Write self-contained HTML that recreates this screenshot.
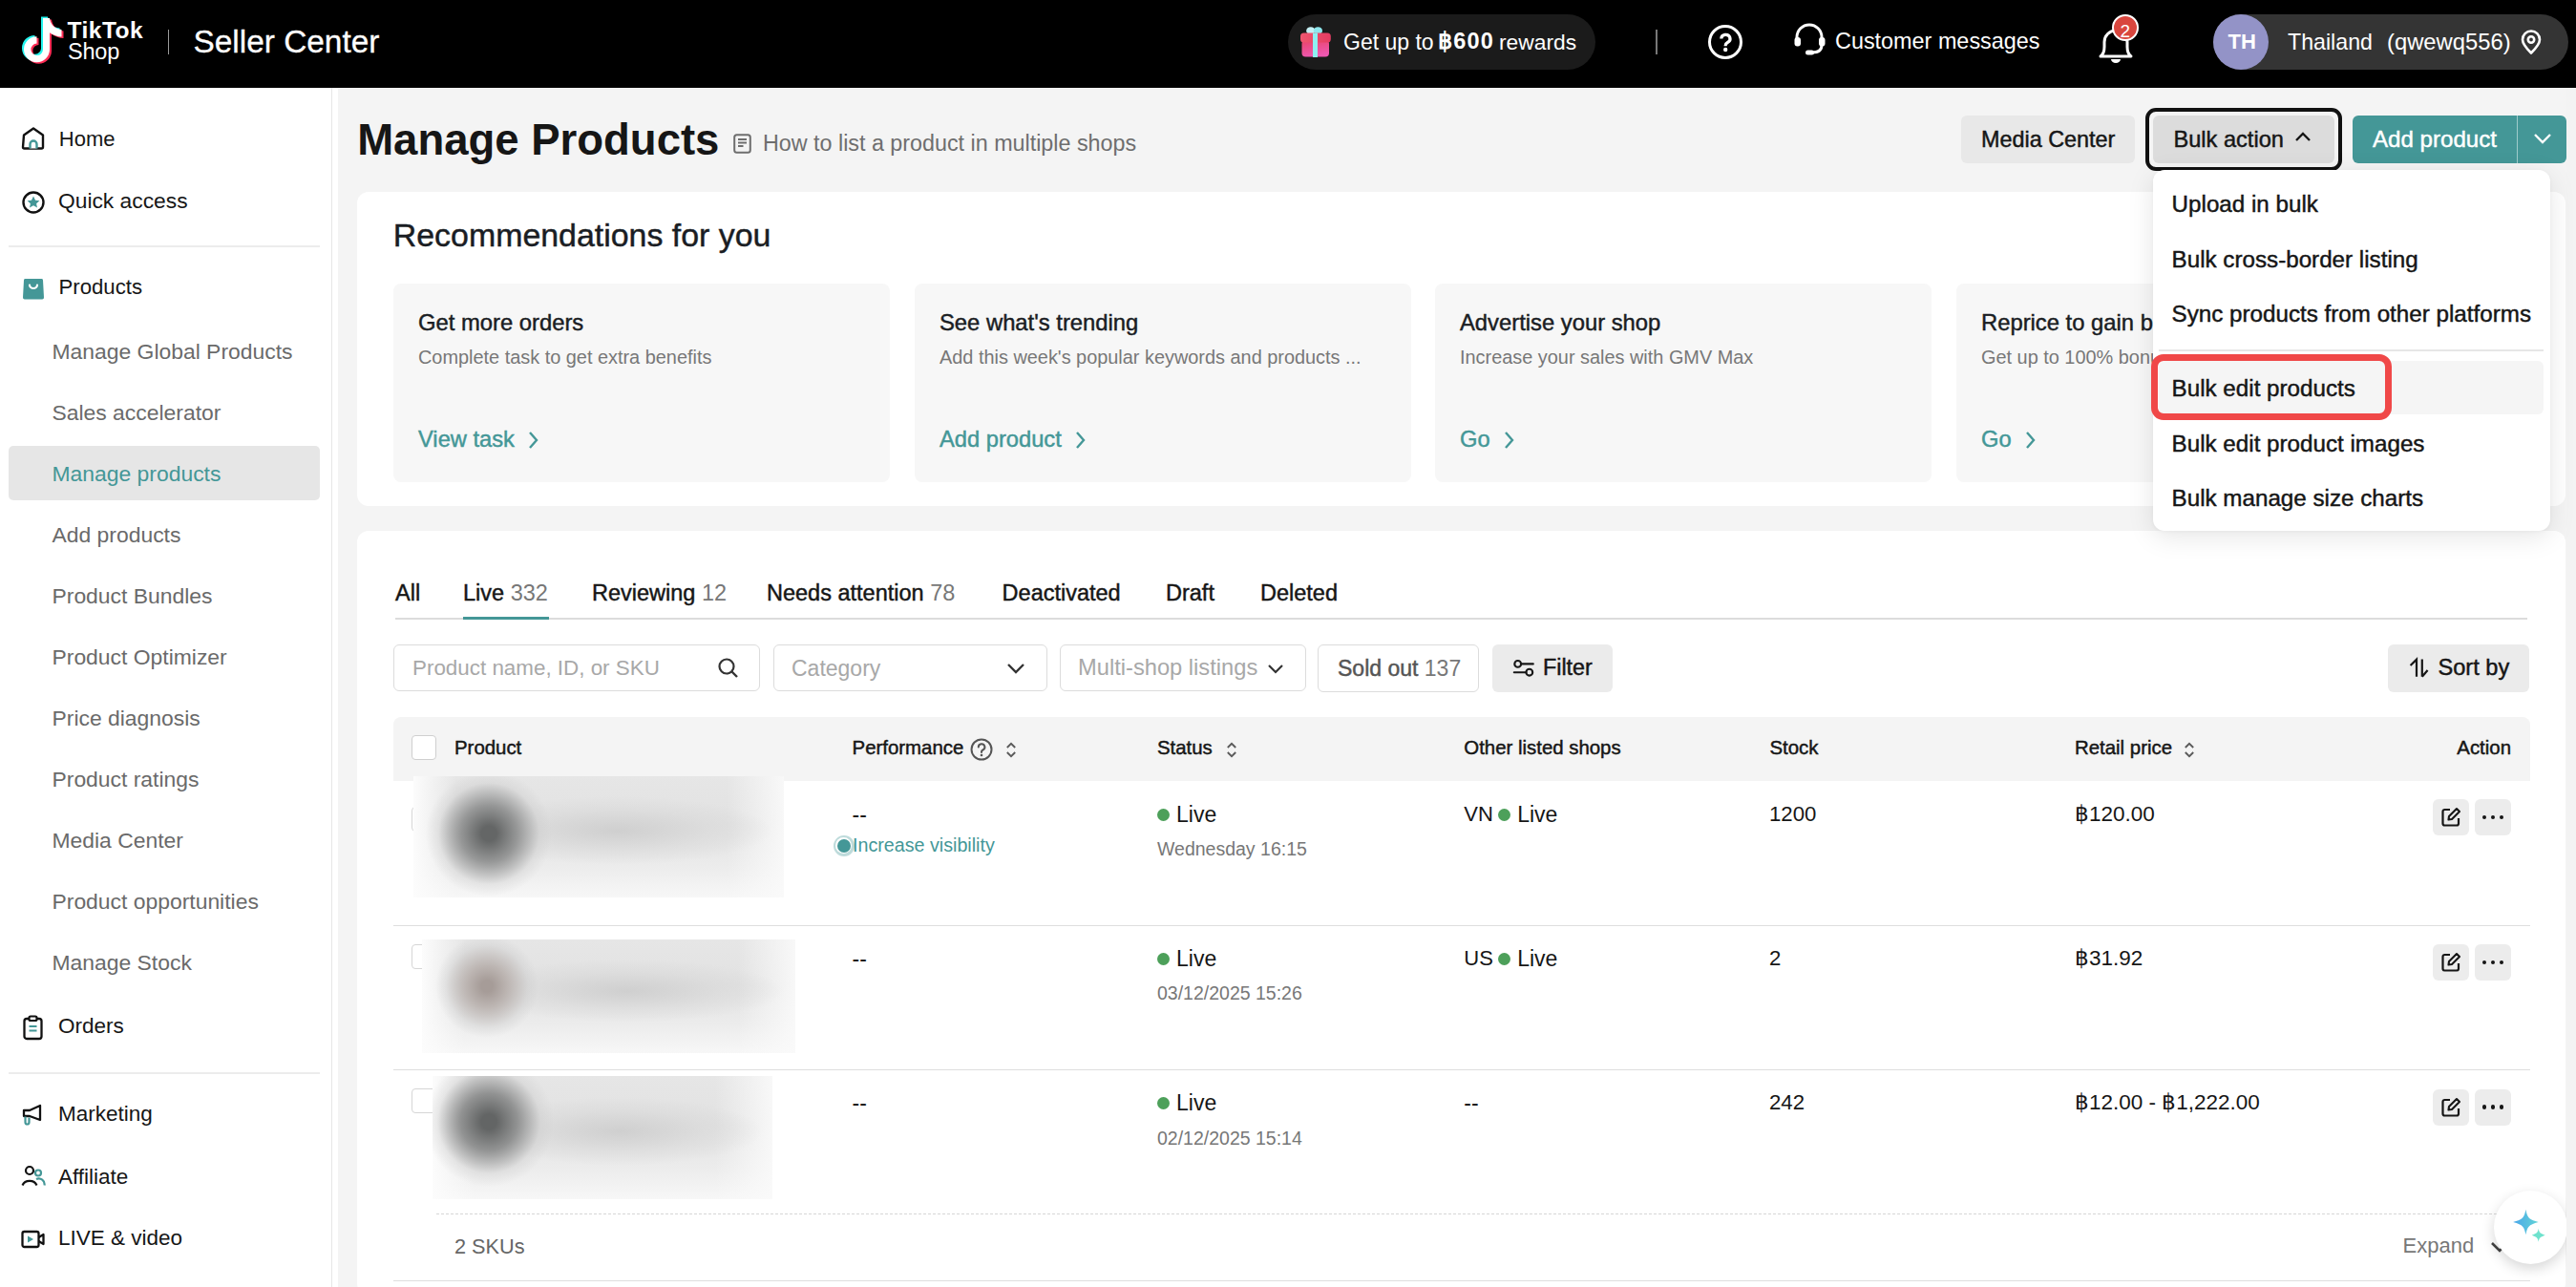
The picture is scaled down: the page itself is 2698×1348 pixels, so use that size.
<!DOCTYPE html><html><head><meta charset="utf-8"><style>
html,body{margin:0;padding:0;}
body{width:2698px;height:1348px;overflow:hidden;position:relative;background:#f4f4f4;font-family:"Liberation Sans",sans-serif;}
.t{position:absolute;white-space:nowrap;line-height:1;}
</style></head><body>
<div style="position:absolute;left:0px;top:0px;width:2698px;height:92px;background:#000;"></div>
<svg style="position:absolute;left:0px;top:0px;" width="80" height="92" viewBox="0 0 80 92" fill="none"><g transform="translate(-2.0,-1.4)"><path d="M45 19 h7 c0.8 6.5 5.5 11.5 12.5 12 v7.5 c-4.5 0 -8.5 -1.6 -12.5 -4.2 v17.5 a13.5 13.5 0 1 1 -13.5 -13.5 v7.2 a6.3 6.3 0 1 0 6.5 6.3 z" fill="#25F4EE"/></g><g transform="translate(2.0,1.4)"><path d="M45 19 h7 c0.8 6.5 5.5 11.5 12.5 12 v7.5 c-4.5 0 -8.5 -1.6 -12.5 -4.2 v17.5 a13.5 13.5 0 1 1 -13.5 -13.5 v7.2 a6.3 6.3 0 1 0 6.5 6.3 z" fill="#FE2C55"/></g><g transform="translate(0,0)"><path d="M45 19 h7 c0.8 6.5 5.5 11.5 12.5 12 v7.5 c-4.5 0 -8.5 -1.6 -12.5 -4.2 v17.5 a13.5 13.5 0 1 1 -13.5 -13.5 v7.2 a6.3 6.3 0 1 0 6.5 6.3 z" fill="#fff"/></g></svg>
<div class="t " style="left:70.5px;top:20.1px;font-size:24.5px;color:#fff;font-weight:bold;letter-spacing:0.5px;">TikTok</div>
<div class="t " style="left:71.0px;top:43.4px;font-size:23.5px;color:#fff;letter-spacing:-0.2px;">Shop</div>
<div style="position:absolute;left:175.5px;top:31px;width:1.6px;height:26px;background:#9a9a9a;"></div>
<div class="t " style="left:202.5px;top:27.4px;font-size:33.4px;color:#fff;-webkit-text-stroke:0.3px #fff;">Seller Center</div>
<div style="position:absolute;left:1349px;top:15px;width:322px;height:58px;background:#1b1b1b;border-radius:29px;"></div>
<svg style="position:absolute;left:1360px;top:26px;" width="36" height="36" viewBox="0 0 36 36" fill="none"><defs><linearGradient id="gb" x1="0" y1="0" x2="0.3" y2="1"><stop offset="0" stop-color="#ea4468"/><stop offset="1" stop-color="#ee58b0"/></linearGradient><linearGradient id="gl" x1="0" y1="0" x2="1" y2="0"><stop offset="0" stop-color="#f0566f"/><stop offset="1" stop-color="#e43c62"/></linearGradient></defs>
<ellipse cx="12.8" cy="6.2" rx="4.6" ry="4" fill="#c5f0f4"/><ellipse cx="20.4" cy="6.2" rx="4.6" ry="4" fill="#8ee8ee"/>
<rect x="3.5" y="16" width="28.5" height="17.5" rx="4" fill="url(#gb)"/>
<rect x="2" y="8.5" width="31.8" height="10" rx="3.5" fill="url(#gl)"/>
<rect x="15" y="8.5" width="5" height="25.5" fill="#8ef0f2"/>
</svg>
<div class="t " style="left:1407.0px;top:32.7px;font-size:23px;color:#fff;">Get up to</div>
<div class="t " style="left:1506.0px;top:32.3px;font-size:23.5px;color:#fff;font-weight:bold;letter-spacing:1.2px;">฿600</div>
<div class="t " style="left:1570.0px;top:32.9px;font-size:22.8px;color:#fff;">rewards</div>
<div style="position:absolute;left:1734px;top:31px;width:2px;height:26px;background:#777;"></div>
<svg style="position:absolute;left:1788px;top:25px;" width="38" height="38" viewBox="0 0 38 38" fill="none"><circle cx="19" cy="19" r="16.5" stroke="#fff" stroke-width="3"/><path d="M14.8 15.6 a4.6 4.3 0 1 1 6.6 3.9 c-1.3 0.7 -2.2 1.6 -2.2 3 v0.8" stroke="#fff" stroke-width="3.2" stroke-linecap="butt"/><circle cx="19.2" cy="27" r="2.2" fill="#fff"/></svg>
<svg style="position:absolute;left:1877px;top:23px;" width="38" height="36" viewBox="0 0 38 36" fill="none"><path d="M5 20 v-4 a13 13 0 0 1 26 0 v4" stroke="#fff" stroke-width="3"/><rect x="2.5" y="16" width="6.5" height="9.5" rx="3" fill="#fff"/><rect x="28" y="16" width="6.5" height="9.5" rx="3" fill="#fff"/><path d="M31 24 c0 5 -3.5 8 -10 8" stroke="#fff" stroke-width="3"/><rect x="14" y="29.5" width="9" height="5" rx="2.5" fill="#fff"/></svg>
<div class="t " style="left:1922.0px;top:32.4px;font-size:23.4px;color:#fff;">Customer messages</div>
<svg style="position:absolute;left:2194px;top:24px;" width="44" height="44" viewBox="0 0 44 44" fill="none"><path d="M6 35 c3 -2 4 -5 4 -10 v-5 a12 12 0 0 1 24 0 v5 c0 5 1 8 4 10 z" stroke="#fff" stroke-width="3" stroke-linejoin="round"/><path d="M17 38 h10 a5 4 0 0 1 -10 0z" fill="#fff"/></svg>
<div style="position:absolute;left:2212px;top:15px;width:28px;height:28px;border-radius:50%;background:#d9463e;border:2px solid #fff;box-sizing:border-box;"></div>
<div class="t " style="left:2220.5px;top:22.9px;font-size:19px;color:#fff;">2</div>
<div style="position:absolute;left:2318px;top:15px;width:372px;height:58px;background:#343434;border-radius:29px;"></div>
<div style="position:absolute;left:2318px;top:15px;width:58px;height:58px;background:#9393c7;border-radius:50%;"></div>
<div class="t " style="left:2333.5px;top:33.4px;font-size:22px;color:#fff;font-weight:bold;">TH</div>
<div class="t " style="left:2396.0px;top:32.5px;font-size:23.2px;color:#fff;">Thailand</div>
<div class="t " style="left:2500.0px;top:32.0px;font-size:23.8px;color:#fff;">(qwewq556)</div>
<svg style="position:absolute;left:2638px;top:30px;" width="26" height="28" viewBox="0 0 26 28" fill="none"><path d="M13 25.5 c-5 -5 -9 -9.5 -9 -14 a9 9 0 0 1 18 0 c0 4.5 -4 9 -9 14z" stroke="#fff" stroke-width="2.6" stroke-linejoin="round"/><circle cx="13" cy="11.5" r="3.2" stroke="#fff" stroke-width="2.6"/></svg>
<div style="position:absolute;left:0px;top:92px;width:347px;height:1256px;background:#fff;"></div>
<div style="position:absolute;left:347px;top:92px;width:1px;height:1256px;background:#e6e6e6;"></div>
<div style="position:absolute;left:348px;top:92px;width:6px;height:1256px;background:#fff;"></div>
<div style="position:absolute;left:348px;top:92px;width:2350px;height:1px;background:#fff;"></div>
<div class="t " style="left:61.8px;top:135.4px;font-size:22px;color:#161616;">Home</div>
<svg style="position:absolute;left:22px;top:132px;" width="26" height="26" viewBox="0 0 26 26" fill="none"><path d="M3 9.5 L13 2.5 L23 9.5 V22 a1.5 1.5 0 0 1 -1.5 1.5 H3.5 a1.5 1.5 0 0 1 -1.5 -1.5 z" stroke="#111" stroke-width="2.4" stroke-linejoin="round" fill="#fff"/><path d="M9.5 23.5 v-4.5 a3.5 3.5 0 0 1 7 0 v4.5" stroke="#449797" stroke-width="2.4" fill="#fff"/></svg>
<div class="t " style="left:61.0px;top:198.7px;font-size:22.8px;color:#161616;">Quick access</div>
<svg style="position:absolute;left:22px;top:199px;" width="26" height="26" viewBox="0 0 26 26" fill="none"><circle cx="13" cy="13" r="10.5" stroke="#111" stroke-width="2.4"/><path d="M13 6.5 l2 4.2 4.4 0.5 -3.3 3 0.9 4.4 -4 -2.3 -4 2.3 0.9 -4.4 -3.3 -3 4.4 -0.5z" fill="#449797"/></svg>
<div style="position:absolute;left:9px;top:257px;width:326px;height:2px;background:#ececec;"></div>
<svg style="position:absolute;left:23px;top:290px;" width="24" height="25" viewBox="0 0 24 25" fill="none"><path d="M3.5 2 h17 a1.5 1.5 0 0 1 1.5 1.4 L23 21.5 a1.8 1.8 0 0 1 -1.8 1.9 H2.8 A1.8 1.8 0 0 1 1 21.5 L2 3.4 A1.5 1.5 0 0 1 3.5 2z" fill="#449797"/><path d="M8 8.5 a4 3.5 0 0 0 8 0" stroke="#fff" stroke-width="2.2" stroke-linecap="round"/></svg>
<div class="t " style="left:61.5px;top:290.2px;font-size:22.2px;color:#161616;">Products</div>
<div style="position:absolute;left:9px;top:467px;width:326px;height:57px;background:#e6e6e6;border-radius:5px;"></div>
<div class="t " style="left:54.5px;top:356.6px;font-size:22.9px;color:#6a6a6a;">Manage Global Products</div>
<div class="t " style="left:54.5px;top:420.6px;font-size:22.9px;color:#6a6a6a;">Sales accelerator</div>
<div class="t " style="left:54.5px;top:484.6px;font-size:22.9px;color:#449797;">Manage products</div>
<div class="t " style="left:54.5px;top:548.6px;font-size:22.9px;color:#6a6a6a;">Add products</div>
<div class="t " style="left:54.5px;top:612.6px;font-size:22.9px;color:#6a6a6a;">Product Bundles</div>
<div class="t " style="left:54.5px;top:676.6px;font-size:22.9px;color:#6a6a6a;">Product Optimizer</div>
<div class="t " style="left:54.5px;top:740.6px;font-size:22.9px;color:#6a6a6a;">Price diagnosis</div>
<div class="t " style="left:54.5px;top:804.6px;font-size:22.9px;color:#6a6a6a;">Product ratings</div>
<div class="t " style="left:54.5px;top:868.6px;font-size:22.9px;color:#6a6a6a;">Media Center</div>
<div class="t " style="left:54.5px;top:932.6px;font-size:22.9px;color:#6a6a6a;">Product opportunities</div>
<div class="t " style="left:54.5px;top:996.6px;font-size:22.9px;color:#6a6a6a;">Manage Stock</div>
<div class="t " style="left:61.0px;top:1063.9px;font-size:22.5px;color:#161616;">Orders</div>
<svg style="position:absolute;left:23px;top:1063px;" width="24" height="27" viewBox="0 0 24 27" fill="none"><rect x="2.5" y="4" width="18" height="21" rx="2.5" stroke="#111" stroke-width="2.3"/><rect x="7.5" y="1.5" width="8" height="4.5" rx="1.5" stroke="#111" stroke-width="2.2" fill="#fff"/><path d="M7.5 12 h8 M7.5 16.5 h8" stroke="#449797" stroke-width="2.2"/></svg>
<div style="position:absolute;left:9px;top:1123px;width:326px;height:2px;background:#ececec;"></div>
<div class="t " style="left:61.0px;top:1156.4px;font-size:22.5px;color:#161616;">Marketing</div>
<svg style="position:absolute;left:22px;top:1155px;" width="26" height="26" viewBox="0 0 26 26" fill="none"><path d="M3 8 h6 l11 -5 v15 l-11 -4 h-6 z" stroke="#111" stroke-width="2.3" stroke-linejoin="round"/><path d="M4.5 14.5 v6 a2 2 0 0 0 4 0 v-5" stroke="#449797" stroke-width="2.2"/></svg>
<div class="t " style="left:61.0px;top:1222.4px;font-size:22.5px;color:#161616;">Affiliate</div>
<svg style="position:absolute;left:22px;top:1220px;" width="26" height="24" viewBox="0 0 26 24" fill="none"><circle cx="9" cy="6" r="4" stroke="#111" stroke-width="2.2"/><path d="M1.5 21.5 a8 7 0 0 1 15 0" stroke="#111" stroke-width="2.2"/><circle cx="18" cy="8.5" r="3" stroke="#449797" stroke-width="2.2"/><path d="M16 15 a6 6 0 0 1 8.5 6.5" stroke="#449797" stroke-width="2.2"/></svg>
<div class="t " style="left:61.0px;top:1286.4px;font-size:22.5px;color:#161616;">LIVE &amp; video</div>
<svg style="position:absolute;left:22px;top:1288px;" width="26" height="20" viewBox="0 0 26 20" fill="none"><rect x="1.5" y="2" width="17" height="16" rx="2" stroke="#111" stroke-width="2.3"/><path d="M18.5 8 l5 -3 v10 l-5 -3" stroke="#111" stroke-width="2.3" stroke-linejoin="round"/><path d="M7 6.5 l6 3.5 -6 3.5z" fill="#449797"/></svg>
<div class="t " style="left:374.2px;top:124.0px;font-size:45.5px;color:#161616;font-weight:bold;">Manage Products</div>
<svg style="position:absolute;left:768px;top:140px;" width="19" height="21" viewBox="0 0 19 21" fill="none"><rect x="1.2" y="1.2" width="16.6" height="18.6" rx="2.5" stroke="#6e6e6e" stroke-width="2"/><path d="M5 6 h9 M5 9.5 h9 M5 13 h5.5" stroke="#6e6e6e" stroke-width="1.8"/></svg>
<div class="t " style="left:799.0px;top:139.1px;font-size:23.3px;color:#6e6e6e;">How to list a product in multiple shops</div>
<div style="position:absolute;left:2054px;top:121px;width:182px;height:50px;background:#e8e8e8;border-radius:6px;"></div>
<div class="t " style="left:2075.0px;top:134.7px;font-size:23.4px;color:#161616;-webkit-text-stroke:0.45px currentColor;">Media Center</div>
<div style="position:absolute;left:2247px;top:113px;width:206px;height:66px;box-sizing:border-box;border:4.5px solid #111;border-radius:11px;"></div>
<div style="position:absolute;left:2255px;top:121px;width:190px;height:50px;background:#dcdcdc;border-radius:6px;"></div>
<div class="t " style="left:2276.5px;top:134.5px;font-size:23.6px;color:#161616;-webkit-text-stroke:0.45px currentColor;">Bulk action</div>
<svg style="position:absolute;left:2402px;top:136px;" width="20" height="14" viewBox="0 0 20 14" fill="none"><path d="M3 11 L10 4 L17 11" stroke="#161616" stroke-width="2.4"/></svg>
<div style="position:absolute;left:2464px;top:121px;width:224px;height:50px;background:#449797;border-radius:6px;"></div>
<div style="position:absolute;left:2636px;top:121px;width:1.2px;height:50px;background:#9fcccc;"></div>
<div class="t " style="left:2485.0px;top:134.1px;font-size:24.1px;color:#fff;-webkit-text-stroke:0.45px currentColor;">Add product</div>
<svg style="position:absolute;left:2652px;top:138px;" width="22" height="14" viewBox="0 0 22 14" fill="none"><path d="M3 3 L11 11 L19 3" stroke="#fff" stroke-width="2.4"/></svg>
<div style="position:absolute;left:374px;top:201px;width:2313px;height:329px;background:#fff;border-radius:12px;"></div>
<div class="t " style="left:411.8px;top:230.3px;font-size:33.9px;color:#1a1d23;-webkit-text-stroke:0.45px currentColor;">Recommendations for you</div>
<div style="position:absolute;left:412px;top:297px;width:520px;height:208px;background:#f7f7f7;border-radius:8px;"></div>
<div class="t " style="left:438.0px;top:325.8px;font-size:23.8px;color:#1a1d23;-webkit-text-stroke:0.45px currentColor;">Get more orders</div>
<div class="t " style="left:438.0px;top:365.1px;font-size:19.9px;color:#777;">Complete task to get extra benefits</div>
<div class="t " style="left:438.0px;top:448.9px;font-size:23.7px;color:#449797;-webkit-text-stroke:0.45px currentColor;">View task</div>
<svg style="position:absolute;left:552px;top:450px;" width="14" height="22" viewBox="0 0 14 22" fill="none"><path d="M3 3 L10 11 L3 19" stroke="#449797" stroke-width="2.4"/></svg>
<div style="position:absolute;left:958px;top:297px;width:520px;height:208px;background:#f7f7f7;border-radius:8px;"></div>
<div class="t " style="left:984.0px;top:325.8px;font-size:23.8px;color:#1a1d23;-webkit-text-stroke:0.45px currentColor;">See what's trending</div>
<div class="t " style="left:984.0px;top:365.1px;font-size:19.9px;color:#777;">Add this week's popular keywords and products ...</div>
<div class="t " style="left:984.0px;top:448.9px;font-size:23.7px;color:#449797;-webkit-text-stroke:0.45px currentColor;">Add product</div>
<svg style="position:absolute;left:1125px;top:450px;" width="14" height="22" viewBox="0 0 14 22" fill="none"><path d="M3 3 L10 11 L3 19" stroke="#449797" stroke-width="2.4"/></svg>
<div style="position:absolute;left:1503px;top:297px;width:520px;height:208px;background:#f7f7f7;border-radius:8px;"></div>
<div class="t " style="left:1529.0px;top:325.8px;font-size:23.8px;color:#1a1d23;-webkit-text-stroke:0.45px currentColor;">Advertise your shop</div>
<div class="t " style="left:1529.0px;top:365.1px;font-size:19.9px;color:#777;">Increase your sales with GMV Max</div>
<div class="t " style="left:1529.0px;top:448.9px;font-size:23.7px;color:#449797;-webkit-text-stroke:0.45px currentColor;">Go</div>
<svg style="position:absolute;left:1574px;top:450px;" width="14" height="22" viewBox="0 0 14 22" fill="none"><path d="M3 3 L10 11 L3 19" stroke="#449797" stroke-width="2.4"/></svg>
<div style="position:absolute;left:2049px;top:297px;width:520px;height:208px;background:#f7f7f7;border-radius:8px;"></div>
<div class="t " style="left:2075.0px;top:325.8px;font-size:23.8px;color:#1a1d23;-webkit-text-stroke:0.45px currentColor;">Reprice to gain better sales</div>
<div class="t " style="left:2075.0px;top:365.1px;font-size:19.9px;color:#777;">Get up to 100% bonus rewards</div>
<div class="t " style="left:2075.0px;top:448.9px;font-size:23.7px;color:#449797;-webkit-text-stroke:0.45px currentColor;">Go</div>
<svg style="position:absolute;left:2120px;top:450px;" width="14" height="22" viewBox="0 0 14 22" fill="none"><path d="M3 3 L10 11 L3 19" stroke="#449797" stroke-width="2.4"/></svg>
<div style="position:absolute;left:374px;top:556px;width:2313px;height:800px;background:#fff;border-radius:12px;"></div>
<div class="t " style="left:414.0px;top:609.8px;font-size:23.5px;color:#161616;-webkit-text-stroke:0.45px currentColor;">All</div>
<div class="t " style="left:485.0px;top:609.8px;font-size:23.5px;color:#161616;-webkit-text-stroke:0.45px currentColor;">Live<span style="color:#777;-webkit-text-stroke:0;"> 332</span></div>
<div class="t " style="left:620.0px;top:609.8px;font-size:23.5px;color:#161616;-webkit-text-stroke:0.45px currentColor;">Reviewing<span style="color:#777;-webkit-text-stroke:0;"> 12</span></div>
<div class="t " style="left:803.0px;top:609.8px;font-size:23.5px;color:#161616;-webkit-text-stroke:0.45px currentColor;">Needs attention<span style="color:#777;-webkit-text-stroke:0;"> 78</span></div>
<div class="t " style="left:1049.6px;top:609.8px;font-size:23.5px;color:#161616;-webkit-text-stroke:0.45px currentColor;">Deactivated</div>
<div class="t " style="left:1221.0px;top:609.8px;font-size:23.5px;color:#161616;-webkit-text-stroke:0.45px currentColor;">Draft</div>
<div class="t " style="left:1320.0px;top:609.8px;font-size:23.5px;color:#161616;-webkit-text-stroke:0.45px currentColor;">Deleted</div>
<div style="position:absolute;left:414px;top:647px;width:2233px;height:2px;background:#dcdcdc;"></div>
<div style="position:absolute;left:485px;top:646px;width:90px;height:3px;background:#449797;"></div>
<div style="position:absolute;left:412px;top:675px;width:384px;height:49px;box-sizing:border-box;border:1.5px solid #dcdcdc;border-radius:6px;background:#fff;"></div>
<div class="t " style="left:432.0px;top:689.0px;font-size:22.4px;color:#a8a8a8;">Product name, ID, or SKU</div>
<svg style="position:absolute;left:750px;top:687px;" width="26" height="26" viewBox="0 0 26 26" fill="none"><circle cx="11" cy="11" r="7.5" stroke="#333" stroke-width="2.2"/><path d="M16.5 16.5 L22 22" stroke="#333" stroke-width="2.4"/></svg>
<div style="position:absolute;left:809.5px;top:675px;width:287px;height:49px;box-sizing:border-box;border:1.5px solid #dcdcdc;border-radius:6px;background:#fff;"></div>
<div class="t " style="left:829.0px;top:688.5px;font-size:23px;color:#a8a8a8;">Category</div>
<svg style="position:absolute;left:1053px;top:692px;" width="22" height="16" viewBox="0 0 22 16" fill="none"><path d="M3 4 L11 12 L19 4" stroke="#333" stroke-width="2.4"/></svg>
<div style="position:absolute;left:1110px;top:675px;width:258px;height:49px;box-sizing:border-box;border:1.5px solid #dcdcdc;border-radius:6px;background:#fff;"></div>
<div class="t " style="left:1129.0px;top:687.9px;font-size:23.7px;color:#a8a8a8;">Multi-shop listings</div>
<svg style="position:absolute;left:1326px;top:693px;" width="20" height="14" viewBox="0 0 20 14" fill="none"><path d="M3 4 L10 11 L17 4" stroke="#333" stroke-width="2.2"/></svg>
<div style="position:absolute;left:1380px;top:674.5px;width:169px;height:50px;box-sizing:border-box;border:1.5px solid #dcdcdc;border-radius:6px;background:#fff;"></div>
<div class="t " style="left:1401.0px;top:688.5px;font-size:23px;color:#555;-webkit-text-stroke:0.45px currentColor;">Sold out <span style="color:#777;-webkit-text-stroke:0;">137</span></div>
<div style="position:absolute;left:1563px;top:674.5px;width:126px;height:50px;background:#ebebeb;border-radius:6px;"></div>
<svg style="position:absolute;left:1580px;top:686px;" width="30" height="24" viewBox="0 0 30 24" fill="none"><circle cx="9.7" cy="9.4" r="3.4" stroke="#161616" stroke-width="2.1"/><path d="M13.2 9.4 H25.8 M5.8 18.2 H18.4" stroke="#161616" stroke-width="2.1" stroke-linecap="round"/><circle cx="21.8" cy="18.2" r="3.4" stroke="#161616" stroke-width="2.1"/></svg>
<div class="t " style="left:1616.0px;top:688.1px;font-size:23.3px;color:#161616;-webkit-text-stroke:0.45px currentColor;">Filter</div>
<div style="position:absolute;left:2501px;top:674.5px;width:148px;height:50px;background:#ebebeb;border-radius:6px;"></div>
<svg style="position:absolute;left:2520px;top:686px;" width="26" height="26" viewBox="0 0 26 26" fill="none"><path d="M4.6 11 L11 4.6 V22.8 M16.8 22.8 V4.6 M16.8 22.8 L22.6 16" stroke="#161616" stroke-width="2.2" stroke-linejoin="miter"/></svg>
<div class="t " style="left:2553.5px;top:687.8px;font-size:23.6px;color:#161616;-webkit-text-stroke:0.45px currentColor;">Sort by</div>
<div style="position:absolute;left:412px;top:751px;width:2238px;height:67px;background:#f4f4f4;border-radius:8px 8px 0 0;"></div>
<div style="position:absolute;left:431px;top:770px;width:26px;height:26px;box-sizing:border-box;border:1.5px solid #cfcfcf;border-radius:4px;background:#fff;"></div>
<div class="t " style="left:476.0px;top:773.1px;font-size:20.4px;color:#161616;-webkit-text-stroke:0.45px currentColor;">Product</div>
<div class="t " style="left:892.6px;top:773.1px;font-size:20.4px;color:#161616;-webkit-text-stroke:0.45px currentColor;">Performance</div>
<div class="t " style="left:1212.0px;top:773.1px;font-size:20.4px;color:#161616;-webkit-text-stroke:0.45px currentColor;">Status</div>
<div class="t " style="left:1533.3px;top:773.1px;font-size:20.4px;color:#161616;-webkit-text-stroke:0.45px currentColor;">Other listed shops</div>
<div class="t " style="left:1853.5px;top:773.1px;font-size:20.4px;color:#161616;-webkit-text-stroke:0.45px currentColor;">Stock</div>
<div class="t " style="left:2173.0px;top:773.1px;font-size:20.4px;color:#161616;-webkit-text-stroke:0.45px currentColor;">Retail price</div>
<div class="t " style="left:2630.0px;top:773.1px;font-size:20.4px;color:#161616;-webkit-text-stroke:0.45px currentColor;transform:translateX(-100%);">Action</div>
<svg style="position:absolute;left:1015px;top:771.5px;" width="26" height="26" viewBox="0 0 26 26" fill="none"><circle cx="13" cy="13" r="10.5" stroke="#555" stroke-width="2"/><path d="M9.8 10.5 a3.3 3.3 0 1 1 4.6 3 c-0.8 0.4 -1.4 0.9 -1.4 1.8 v0.7" stroke="#555" stroke-width="2" stroke-linecap="round"/><circle cx="13" cy="19" r="1.3" fill="#555"/></svg>
<svg style="position:absolute;left:1052px;top:774.5px;" width="14" height="20" viewBox="0 0 14 20" fill="none"><path d="M2.8 8 L7 3.8 L11.2 8 M2.8 13 L7 17.2 L11.2 13" stroke="#5a5a5a" stroke-width="1.9"/></svg>
<svg style="position:absolute;left:1283px;top:774.5px;" width="14" height="20" viewBox="0 0 14 20" fill="none"><path d="M2.8 8 L7 3.8 L11.2 8 M2.8 13 L7 17.2 L11.2 13" stroke="#5a5a5a" stroke-width="1.9"/></svg>
<svg style="position:absolute;left:2286px;top:774.5px;" width="14" height="20" viewBox="0 0 14 20" fill="none"><path d="M2.8 8 L7 3.8 L11.2 8 M2.8 13 L7 17.2 L11.2 13" stroke="#5a5a5a" stroke-width="1.9"/></svg>
<div class="t " style="left:892.6px;top:841.5px;font-size:23px;color:#161616;">--</div>
<div style="position:absolute;left:1212.0px;top:846.5px;width:13.0px;height:13.0px;border-radius:50%;background:#4da05a;"></div>
<div class="t " style="left:1232.0px;top:841.5px;font-size:23px;color:#161616;">Live</div>
<div class="t " style="left:1212.0px;top:879.5px;font-size:19.5px;color:#777;">Wednesday 16:15</div>
<div class="t " style="left:1533.3px;top:842.4px;font-size:22px;color:#161616;">VN</div>
<div style="position:absolute;left:1569.0px;top:846.5px;width:13.0px;height:13.0px;border-radius:50%;background:#4da05a;"></div>
<div class="t " style="left:1589.2px;top:841.5px;font-size:23px;color:#161616;">Live</div>
<div class="t " style="left:1853.0px;top:842.2px;font-size:22.2px;color:#161616;">1200</div>
<div class="t " style="left:2173.0px;top:841.9px;font-size:22.5px;color:#161616;">฿120.00</div>
<div style="position:absolute;left:2548px;top:837px;width:38px;height:38px;background:#ececec;border-radius:6px;"></div>
<div style="position:absolute;left:2592px;top:837px;width:38px;height:38px;background:#ececec;border-radius:6px;"></div>
<svg style="position:absolute;left:2555px;top:844px;" width="24" height="24" viewBox="0 0 24 24" fill="none"><path d="M11 4 H5.5 a2 2 0 0 0 -2 2 V18.5 a2 2 0 0 0 2 2 H18 a2 2 0 0 0 2 -2 V13" stroke="#161616" stroke-width="2.2"/><path d="M9.5 14.5 L10 11 L18 3 L21 6 L13 14z" stroke="#161616" stroke-width="2.1" stroke-linejoin="round"/></svg>
<div style="position:absolute;left:2599.8px;top:853.8px;width:4.4px;height:4.4px;border-radius:50%;background:#161616;"></div>
<div style="position:absolute;left:2608.8px;top:853.8px;width:4.4px;height:4.4px;border-radius:50%;background:#161616;"></div>
<div style="position:absolute;left:2617.8px;top:853.8px;width:4.4px;height:4.4px;border-radius:50%;background:#161616;"></div>
<div class="t " style="left:892.6px;top:992.5px;font-size:23px;color:#161616;">--</div>
<div style="position:absolute;left:1212.0px;top:997.5px;width:13.0px;height:13.0px;border-radius:50%;background:#4da05a;"></div>
<div class="t " style="left:1232.0px;top:992.5px;font-size:23px;color:#161616;">Live</div>
<div class="t " style="left:1212.0px;top:1030.5px;font-size:19.5px;color:#777;">03/12/2025 15:26</div>
<div class="t " style="left:1533.3px;top:993.4px;font-size:22px;color:#161616;">US</div>
<div style="position:absolute;left:1569.0px;top:997.5px;width:13.0px;height:13.0px;border-radius:50%;background:#4da05a;"></div>
<div class="t " style="left:1589.2px;top:992.5px;font-size:23px;color:#161616;">Live</div>
<div class="t " style="left:1853.0px;top:993.2px;font-size:22.2px;color:#161616;">2</div>
<div class="t " style="left:2173.0px;top:992.9px;font-size:22.5px;color:#161616;">฿31.92</div>
<div style="position:absolute;left:2548px;top:989px;width:38px;height:38px;background:#ececec;border-radius:6px;"></div>
<div style="position:absolute;left:2592px;top:989px;width:38px;height:38px;background:#ececec;border-radius:6px;"></div>
<svg style="position:absolute;left:2555px;top:996px;" width="24" height="24" viewBox="0 0 24 24" fill="none"><path d="M11 4 H5.5 a2 2 0 0 0 -2 2 V18.5 a2 2 0 0 0 2 2 H18 a2 2 0 0 0 2 -2 V13" stroke="#161616" stroke-width="2.2"/><path d="M9.5 14.5 L10 11 L18 3 L21 6 L13 14z" stroke="#161616" stroke-width="2.1" stroke-linejoin="round"/></svg>
<div style="position:absolute;left:2599.8px;top:1005.8px;width:4.4px;height:4.4px;border-radius:50%;background:#161616;"></div>
<div style="position:absolute;left:2608.8px;top:1005.8px;width:4.4px;height:4.4px;border-radius:50%;background:#161616;"></div>
<div style="position:absolute;left:2617.8px;top:1005.8px;width:4.4px;height:4.4px;border-radius:50%;background:#161616;"></div>
<div class="t " style="left:892.6px;top:1143.5px;font-size:23px;color:#161616;">--</div>
<div style="position:absolute;left:1212.0px;top:1148.5px;width:13.0px;height:13.0px;border-radius:50%;background:#4da05a;"></div>
<div class="t " style="left:1232.0px;top:1143.5px;font-size:23px;color:#161616;">Live</div>
<div class="t " style="left:1212.0px;top:1182.5px;font-size:19.5px;color:#777;">02/12/2025 15:14</div>
<div class="t " style="left:1533.3px;top:1143.5px;font-size:23px;color:#161616;">--</div>
<div class="t " style="left:1853.0px;top:1144.2px;font-size:22.2px;color:#161616;">242</div>
<div class="t " style="left:2173.0px;top:1143.9px;font-size:22.5px;color:#161616;">฿12.00 - ฿1,222.00</div>
<div style="position:absolute;left:2548px;top:1140.5px;width:38px;height:38px;background:#ececec;border-radius:6px;"></div>
<div style="position:absolute;left:2592px;top:1140.5px;width:38px;height:38px;background:#ececec;border-radius:6px;"></div>
<svg style="position:absolute;left:2555px;top:1147.5px;" width="24" height="24" viewBox="0 0 24 24" fill="none"><path d="M11 4 H5.5 a2 2 0 0 0 -2 2 V18.5 a2 2 0 0 0 2 2 H18 a2 2 0 0 0 2 -2 V13" stroke="#161616" stroke-width="2.2"/><path d="M9.5 14.5 L10 11 L18 3 L21 6 L13 14z" stroke="#161616" stroke-width="2.1" stroke-linejoin="round"/></svg>
<div style="position:absolute;left:2599.8px;top:1157.3px;width:4.4px;height:4.4px;border-radius:50%;background:#161616;"></div>
<div style="position:absolute;left:2608.8px;top:1157.3px;width:4.4px;height:4.4px;border-radius:50%;background:#161616;"></div>
<div style="position:absolute;left:2617.8px;top:1157.3px;width:4.4px;height:4.4px;border-radius:50%;background:#161616;"></div>
<div style="position:absolute;left:872.5px;top:874.5px;width:22px;height:22px;border-radius:50%;background:rgba(68,151,151,0.35);"></div>
<div style="position:absolute;left:875.0px;top:877.0px;width:17.0px;height:17.0px;border-radius:50%;background:#fff;"></div>
<div style="position:absolute;left:876.5px;top:878.5px;width:14px;height:14px;border-radius:50%;background:#449797;"></div>
<div class="t " style="left:893.0px;top:876.3px;font-size:19.7px;color:#449797;">Increase visibility</div>
<div style="position:absolute;left:412px;top:969px;width:2238px;height:1px;background:#dedede;"></div>
<div style="position:absolute;left:412px;top:1120px;width:2238px;height:1px;background:#dedede;"></div>
<div style="position:absolute;left:457px;top:1271px;width:2193px;height:0;border-top:1.5px dashed #d6d6d6;"></div>
<div class="t " style="left:476.0px;top:1294.6px;font-size:21.7px;color:#666;">2 SKUs</div>
<div class="t " style="left:2516.5px;top:1294.4px;font-size:22px;color:#777;">Expand</div>
<svg style="position:absolute;left:2606px;top:1298px;" width="22" height="16" viewBox="0 0 22 16" fill="none"><path d="M4 4 L12 12 L20 4" stroke="#444" stroke-width="2.6"/></svg>
<div style="position:absolute;left:412px;top:1341px;width:2238px;height:1px;background:#dedede;"></div>
<div style="position:absolute;left:431px;top:845px;width:26px;height:26px;box-sizing:border-box;border:1.5px solid #d6d6d6;border-radius:4px;"></div>
<div style="position:absolute;left:431px;top:989px;width:26px;height:26px;box-sizing:border-box;border:1.5px solid #d6d6d6;border-radius:4px;"></div>
<div style="position:absolute;left:431px;top:1140px;width:26px;height:26px;box-sizing:border-box;border:1.5px solid #d6d6d6;border-radius:4px;"></div>
<div style="position:absolute;left:433px;top:813px;width:388px;height:127px;background:radial-gradient(circle at 79px 60px, #646666 0px, #646666 8px, #979898 30px, rgba(200,200,200,0.35) 53px, rgba(220,220,220,0) 66px),radial-gradient(ellipse 163px 36px at 213px 57px, rgba(205,205,205,0.9), rgba(215,215,215,0.5) 60%, rgba(225,225,225,0) 100%),linear-gradient(to right, rgba(252,252,252,1) 0px, rgba(252,252,252,0) 45px),linear-gradient(to left, rgba(250,250,250,0.9) 0px, rgba(250,250,250,0) 60px),linear-gradient(to bottom, #e6e6e6 0%, #e2e2e2 40%, #ececec 75%, #f7f7f7 100%);"></div>
<div style="position:absolute;left:442px;top:984px;width:391px;height:119px;background:radial-gradient(circle at 68px 49px, #a69c98 0px, #a69c98 6px, #bdb6b3 22px, rgba(200,200,200,0.35) 43px, rgba(220,220,220,0) 54px),radial-gradient(ellipse 164px 33px at 215px 54px, rgba(205,205,205,0.9), rgba(215,215,215,0.5) 60%, rgba(225,225,225,0) 100%),linear-gradient(to right, rgba(252,252,252,1) 0px, rgba(252,252,252,0) 45px),linear-gradient(to left, rgba(250,250,250,0.9) 0px, rgba(250,250,250,0) 60px),linear-gradient(to bottom, #e6e6e6 0%, #e2e2e2 40%, #ececec 75%, #f7f7f7 100%);"></div>
<div style="position:absolute;left:453px;top:1127px;width:356px;height:129px;background:radial-gradient(circle at 59px 48px, #636565 0px, #636565 8px, #929393 30px, rgba(200,200,200,0.35) 54px, rgba(220,220,220,0) 68px),radial-gradient(ellipse 150px 36px at 196px 58px, rgba(205,205,205,0.9), rgba(215,215,215,0.5) 60%, rgba(225,225,225,0) 100%),linear-gradient(to right, rgba(252,252,252,1) 0px, rgba(252,252,252,0) 45px),linear-gradient(to left, rgba(250,250,250,0.9) 0px, rgba(250,250,250,0) 60px),linear-gradient(to bottom, #e6e6e6 0%, #e2e2e2 40%, #ececec 75%, #f7f7f7 100%);"></div>
<div style="position:absolute;left:2612px;top:1247px;width:77px;height:77px;border-radius:50%;background:#fff;box-shadow:0 5px 14px rgba(0,0,0,0.16);"></div>
<svg style="position:absolute;left:2620px;top:1255px;" width="52" height="52" viewBox="0 0 52 52" fill="none"><defs><linearGradient id="sg" x1="0" y1="0" x2="1" y2="0"><stop offset="0" stop-color="#4aa6ea"/><stop offset="1" stop-color="#62d4d6"/></linearGradient></defs><path d="M25.4 11.7 C27 20 28 22 38.7 25 C28 28 27 30 25.4 38.3 C23.8 30 22.8 28 12.1 25 C22.8 22 23.8 20 25.4 11.7z" fill="url(#sg)"/><path d="M38.7 31.8 C39.5 36 40 36.5 45.7 38.8 C40 41 39.5 41.5 38.7 45.8 C37.9 41.5 37.4 41 31.7 38.8 C37.4 36.5 37.9 36 38.7 31.8z" fill="#6fe2cd"/></svg>
<div style="position:absolute;left:2688px;top:93px;width:10px;height:1255px;background:#f3f3f3;"></div>
<div style="position:absolute;left:2255px;top:178px;width:416px;height:378px;background:#fff;border-radius:12px;box-shadow:0 6px 28px rgba(0,0,0,0.10), 0 1px 4px rgba(0,0,0,0.04);"></div>
<div style="position:absolute;left:2261px;top:378px;width:403px;height:56px;background:#f5f5f5;border-radius:6px;"></div>
<div class="t " style="left:2274.6px;top:201.7px;font-size:24.2px;color:#161616;-webkit-text-stroke:0.45px currentColor;">Upload in bulk</div>
<div class="t " style="left:2274.6px;top:260.3px;font-size:24.2px;color:#161616;-webkit-text-stroke:0.45px currentColor;">Bulk cross-border listing</div>
<div class="t " style="left:2274.6px;top:317.4px;font-size:24.2px;color:#161616;-webkit-text-stroke:0.45px currentColor;">Sync products from other platforms</div>
<div class="t " style="left:2274.6px;top:394.7px;font-size:24.2px;color:#161616;-webkit-text-stroke:0.45px currentColor;">Bulk edit products</div>
<div class="t " style="left:2274.6px;top:452.7px;font-size:24.2px;color:#161616;-webkit-text-stroke:0.45px currentColor;">Bulk edit product images</div>
<div class="t " style="left:2274.6px;top:510.2px;font-size:24.2px;color:#161616;-webkit-text-stroke:0.45px currentColor;">Bulk manage size charts</div>
<div style="position:absolute;left:2261px;top:366px;width:403px;height:1.5px;background:#e6e6e6;"></div>
<div style="position:absolute;left:2253px;top:371px;width:251.5px;height:68.5px;box-sizing:border-box;border:7.5px solid #f04848;border-radius:13px;"></div>
</body></html>
